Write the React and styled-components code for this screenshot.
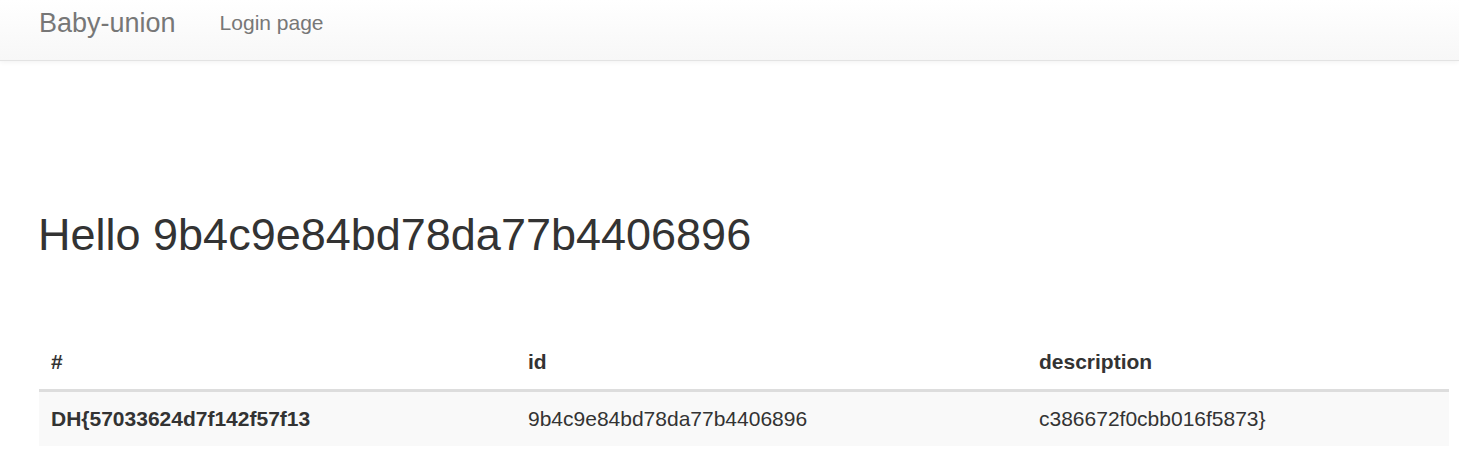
import styled, { createGlobalStyle } from "styled-components";

const GlobalStyle = createGlobalStyle`
  html, body {
    margin: 0;
    padding: 0;
    background: #ffffff;
  }
  body {
    font-family: "Liberation Sans", Arial, Helvetica, sans-serif;
    color: #333333;
    font-size: 21px;
    line-height: 30px;
  }
`;

const Navbar = styled.nav`
  height: 60px;
  display: flex;
  align-items: flex-start;
  padding: 0 39px;
  background-image: linear-gradient(to bottom, #ffffff 0%, #f7f7f7 100%);
  border-bottom: 1px solid #e3e3e3;
  box-shadow: 0 1px 5px rgba(0, 0, 0, 0.06);
`;

const Brand = styled.a`
  font-size: 27px;
  line-height: 30px;
  padding-top: 8px;
  color: #777777;
  text-decoration: none;
`;

const NavLink = styled.a`
  font-size: 21px;
  line-height: 30px;
  padding-top: 8px;
  margin-left: 44px;
  color: #777777;
  text-decoration: none;
`;

const Page = styled.main`
  padding: 0 10px 0 38px;
`;

const Title = styled.h1`
  font-size: 45px;
  line-height: 49.5px;
  font-weight: 400;
  margin: 149px 0 75px;
  color: #333333;
`;

const Table = styled.table`
  width: 1410px;
  margin-left: 1px;
  border-collapse: collapse;
  border-spacing: 0;
  table-layout: fixed;
`;

const Th = styled.th`
  box-sizing: border-box;
  width: ${(p) => p.$w}px;
  text-align: left;
  font-weight: 700;
  padding: 12px;
  line-height: 30px;
  border-bottom: 3px solid #dddddd;
`;

const Row = styled.tr`
  background: ${(p) => (p.$odd ? "#f9f9f9" : "transparent")};
`;

const Td = styled.td`
  padding: 12px;
  line-height: 30px;
  font-weight: ${(p) => (p.$bold ? 700 : 400)};
`;

const rows = [
  {
    num: "DH{57033624d7f142f57f13",
    id: "9b4c9e84bd78da77b4406896",
    description: "c386672f0cbb016f5873}",
  },
];

export default function App() {
  return (
    <>
      <GlobalStyle />
      <Navbar>
        <Brand href="#">Baby-union</Brand>
        <NavLink href="#">Login page</NavLink>
      </Navbar>
      <Page>
        <Title>Hello 9b4c9e84bd78da77b4406896</Title>
        <Table>
          <thead>
            <tr>
              <Th $w={477}>#</Th>
              <Th $w={511}>id</Th>
              <Th $w={422}>description</Th>
            </tr>
          </thead>
          <tbody>
            {rows.map((r, i) => (
              <Row key={r.id} $odd={i % 2 === 0}>
                <Td $bold>{r.num}</Td>
                <Td>{r.id}</Td>
                <Td>{r.description}</Td>
              </Row>
            ))}
          </tbody>
        </Table>
      </Page>
    </>
  );
}
